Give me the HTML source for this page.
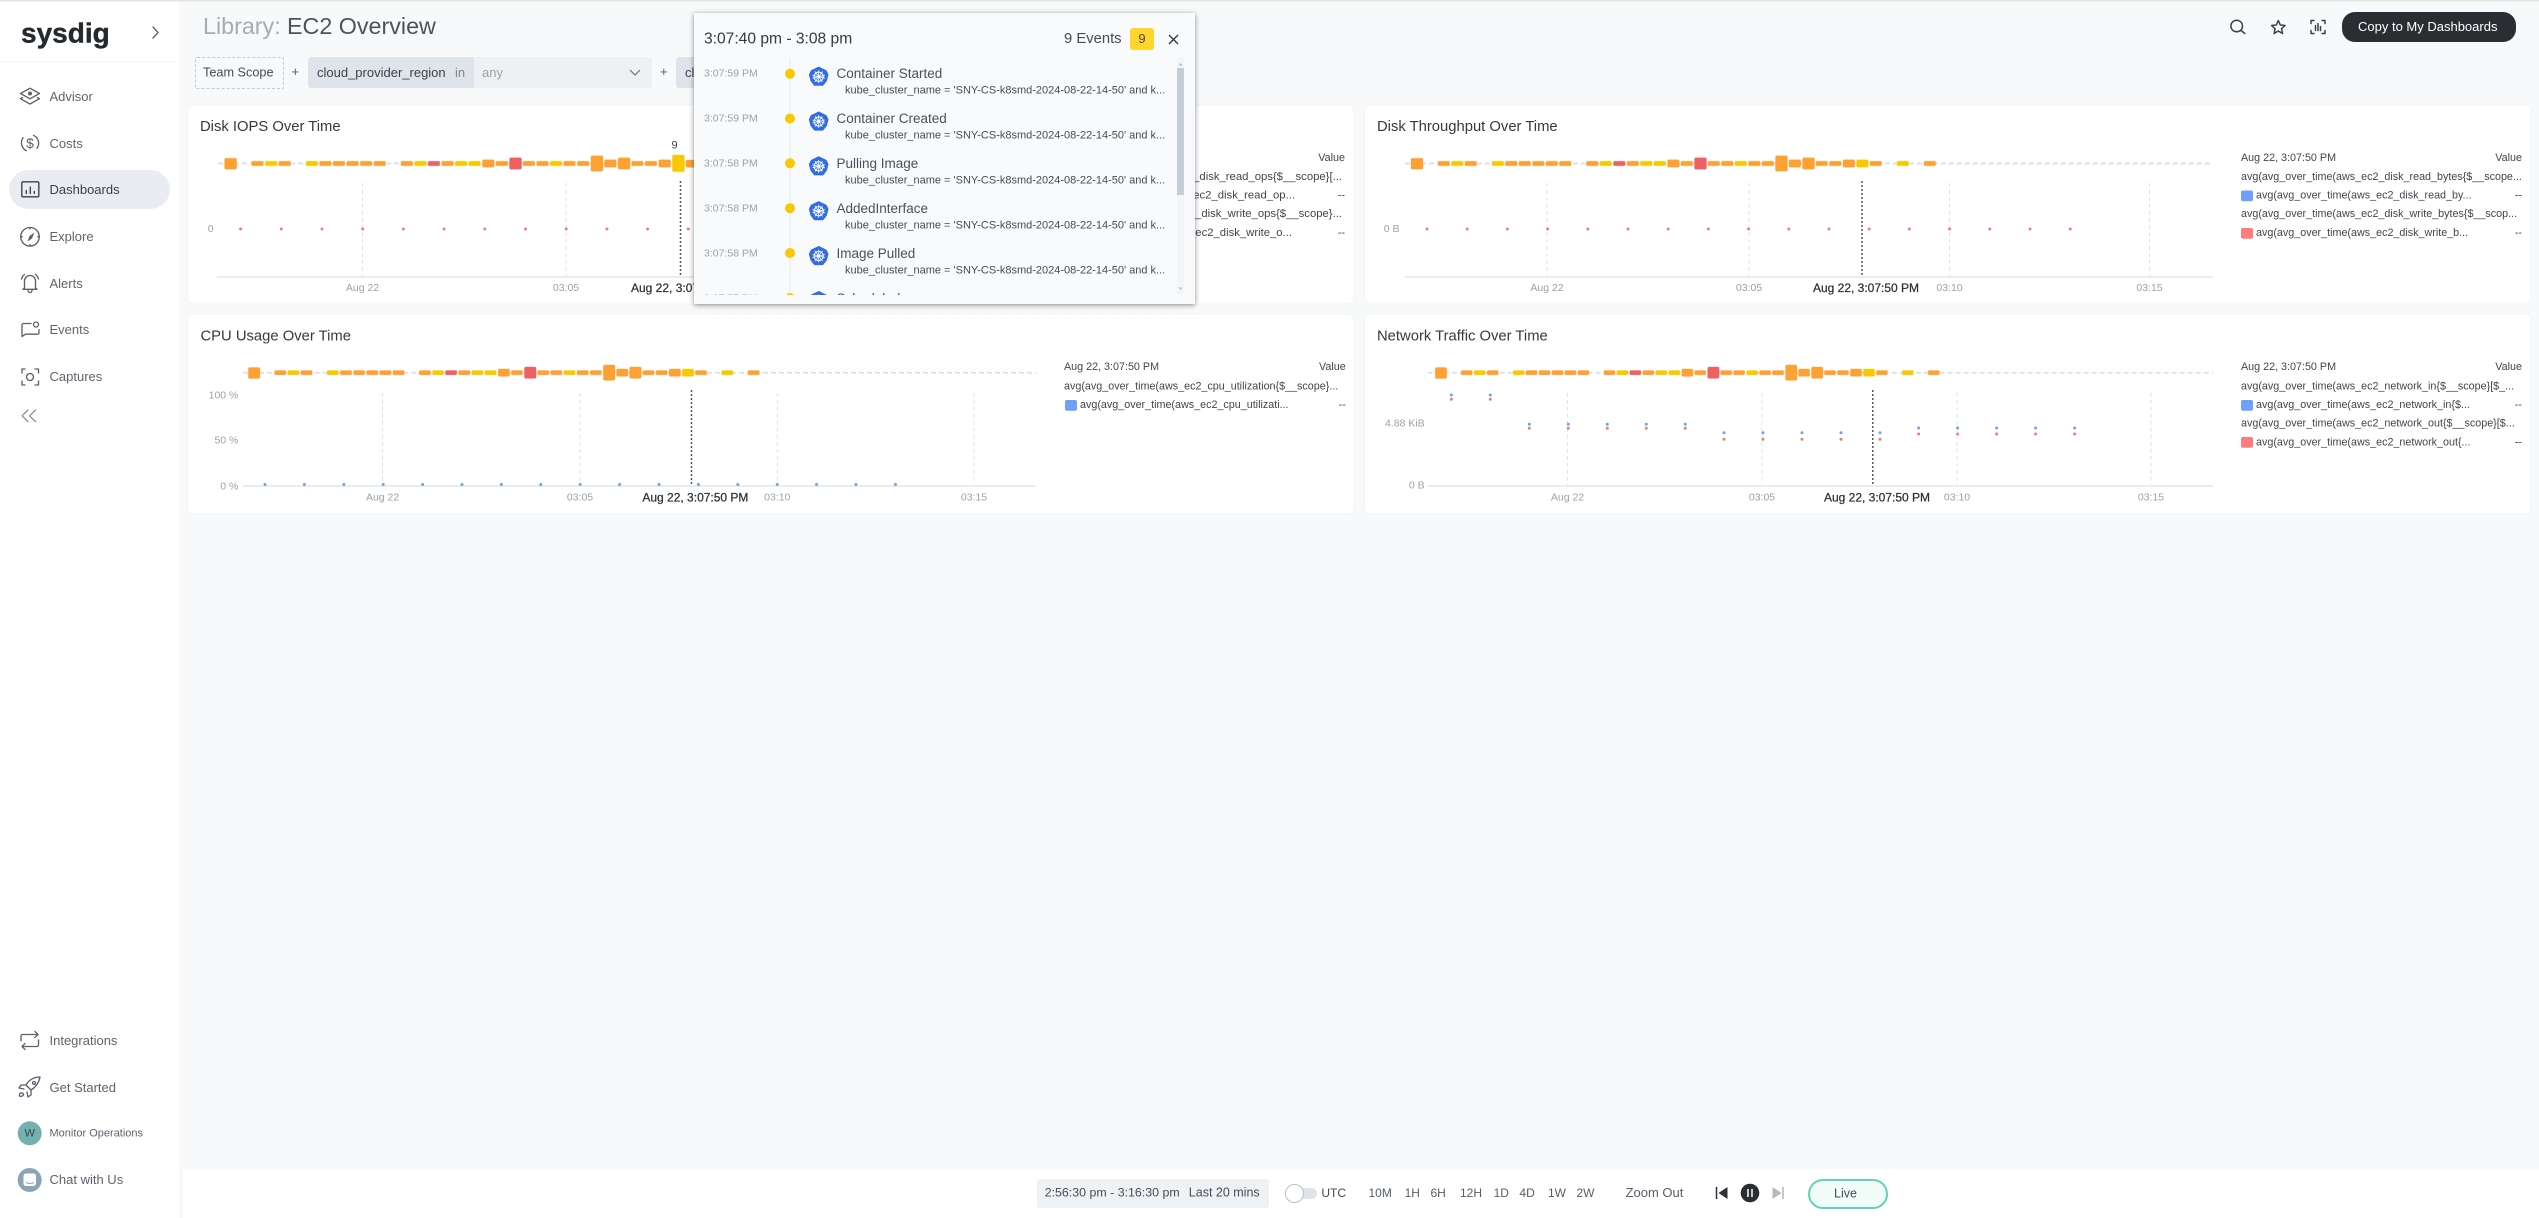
<!DOCTYPE html>
<html lang="en"><head><meta charset="utf-8"><title>Library: EC2 Overview</title>
<style>
html,body{margin:0;padding:0;width:2539px;height:1218px;overflow:hidden;background:#f8f9fb;font-family:"Liberation Sans",sans-serif;color:#3a4149}
#wrap{position:absolute;left:0;top:0;width:2539px;height:1218px;filter:blur(.35px)}
.t{position:absolute;white-space:nowrap;transform:translateY(-50%);line-height:1.2}
.b{position:absolute}
.nav{font-size:13px;color:#5c656e;left:49.5px}
#art{position:absolute;left:0;top:0;z-index:1}
#art text{font-family:"Liberation Sans",sans-serif;dominant-baseline:central}
.lg{font-size:10.75px;fill:#3f464e}
.lg1{font-size:11.3px;fill:#3f464e}
.ax{font-size:10.5px;fill:#9aa2aa}
.tip{font-size:12px;fill:#2c3238;stroke:#2c3238;stroke-width:.25px}
.ttl{font-size:14.8px;fill:#333a42}
.grid{stroke:#dfe2e6;stroke-width:1;stroke-dasharray:4 3}
.cur{stroke:#555;stroke-width:1.5;stroke-dasharray:2 2}
.laneline{stroke:#dde2e8;stroke-width:2;stroke-dasharray:5 3}
.axis{stroke:#e9ecf0;stroke-width:2}
.o{fill:#ffa033;stroke:#ffa033;stroke-opacity:.3;stroke-width:1}
.y{fill:#f7ca00;stroke:#f7ca00;stroke-opacity:.3;stroke-width:1}
.r{fill:#f06060;stroke:#f06060;stroke-opacity:.3;stroke-width:1}
.ic{fill:none;stroke:#5a636c;stroke-width:1.35;stroke-linecap:round;stroke-linejoin:round}
.dotp{stroke:#f5788c;stroke-width:3;stroke-linecap:round}
.dotb{stroke:#6f9ff7;stroke-width:3;stroke-linecap:round}
.dotr{stroke:#f7787c;stroke-width:3;stroke-linecap:round}
#pop{position:absolute;z-index:3;left:694px;top:13px;width:501px;height:291px;background:#f8fafc;box-shadow:0 1px 5px rgba(0,0,0,.45)}
#list{position:absolute;left:0;top:45px;width:501px;height:237px;overflow:hidden}
#pop .tm{font-size:10.5px;color:#9aa2aa;left:10px}
#pop .h{font-size:13.5px;color:#4a5159;left:142.5px}
#pop .s{font-size:11px;color:#454c54;left:151px}
#ui{position:absolute;left:0;top:0;z-index:2}
.rng{font-size:12px;color:#555e67;top:1193px}
</style></head><body>
<div id="wrap">
<svg id="art" width="2539" height="1218" viewBox="0 0 2539 1218" xmlns="http://www.w3.org/2000/svg">
<rect x="0" y="0" width="179" height="1218" fill="#fff"/>
<rect x="183" y="1169" width="2356" height="49" fill="#fff"/>
<rect x="0" y="61" width="179" height="1.5" fill="#f7f8fa"/>
<rect x="9" y="170" width="161" height="39" rx="19.5" fill="#e9edf2"/>
<rect x="0" y="0" width="2539" height="1.5" fill="#e3e5e3"/>

<g fill="#fff" stroke="#f2f4f6">
<rect x="187.5" y="105" width="1166.5" height="199" rx="6"/>
<rect x="1364.5" y="105" width="1166.5" height="199" rx="6"/>
<rect x="187.5" y="314" width="1166.5" height="200" rx="6"/>
<rect x="1364.5" y="314" width="1166.5" height="200" rx="6"/>
</g>

<defs>
<g id="lane">
<rect class="o" x="0" y="-5.2" width="12" height="11" rx="1.5"/>
<rect class="o" x="27" y="-2.2" width="11.6" height="4.4" rx="1"/>
<rect class="y" x="40.5" y="-2.2" width="11.6" height="4.4" rx="1"/>
<rect class="o" x="54" y="-2.2" width="11.6" height="4.4" rx="1"/>
<rect class="y" x="81" y="-2.2" width="11.6" height="4.4" rx="1"/>
<rect class="o" x="94.5" y="-2.2" width="11.6" height="4.4" rx="1"/>
<rect class="o" x="108" y="-2.2" width="11.6" height="4.4" rx="1"/>
<rect class="o" x="121.5" y="-2.2" width="11.6" height="4.4" rx="1"/>
<rect class="o" x="135" y="-2.2" width="11.6" height="4.4" rx="1"/>
<rect class="o" x="148.5" y="-2.2" width="11.6" height="4.4" rx="1"/>
<rect class="o" x="175.5" y="-2.2" width="11.6" height="4.4" rx="1"/>
<rect class="y" x="189" y="-2.2" width="11.6" height="4.4" rx="1"/>
<rect class="r" x="202.5" y="-2.2" width="11.6" height="4.4" rx="1"/>
<rect class="o" x="216" y="-2.2" width="11.6" height="4.4" rx="1"/>
<rect class="y" x="229.5" y="-2.2" width="11.6" height="4.4" rx="1"/>
<rect class="y" x="243" y="-2.2" width="11.6" height="4.4" rx="1"/>
<rect class="o" x="256.5" y="-3.7" width="11.8" height="7.4" rx="1.5"/>
<rect class="o" x="270" y="-2.2" width="11.6" height="4.4" rx="1"/>
<rect class="r" x="283.5" y="-5.7" width="12" height="11.4" rx="1.5"/>
<rect class="o" x="297" y="-2.2" width="11.6" height="4.4" rx="1"/>
<rect class="o" x="310.5" y="-2.2" width="11.6" height="4.4" rx="1"/>
<rect class="y" x="324" y="-2.2" width="11.6" height="4.4" rx="1"/>
<rect class="o" x="337.5" y="-2.2" width="11.6" height="4.4" rx="1"/>
<rect class="o" x="351" y="-2.2" width="11.6" height="4.4" rx="1"/>
<rect class="o" x="364.5" y="-7.7" width="12" height="15.4" rx="1.5"/>
<rect class="o" x="378" y="-3.7" width="11.8" height="7.4" rx="1.5"/>
<rect class="o" x="391.5" y="-5.7" width="12" height="11.4" rx="1.5"/>
<rect class="o" x="405" y="-2.2" width="11.6" height="4.4" rx="1"/>
<rect class="o" x="418.5" y="-2.2" width="11.6" height="4.4" rx="1"/>
<rect class="o" x="432" y="-3.7" width="11.8" height="7.4" rx="1.5"/>
<rect class="y" x="445.5" y="-3.7" width="11.8" height="7.4" rx="1.5"/>
<rect class="o" x="459" y="-2.2" width="11.6" height="4.4" rx="1"/>
<rect class="y" x="486" y="-2.2" width="11.6" height="4.4" rx="1"/>
<rect class="o" x="513" y="-2.2" width="11.6" height="4.4" rx="1"/>
</g>
<g id="k8s">
<path d="M0-9.2 7.2-5.7 9-2 7.4 4 4 8.3-4 8.3-7.4 4-9-2-7.2-5.7Z" fill="#326ce5" stroke="#326ce5" stroke-width="1.6" stroke-linejoin="round"/>
<circle r="4.6" fill="none" stroke="#fff" stroke-width="1.1"/>
<path d="M0-6.4V6.4M-6.2-1.5 6.2 1.5M-6.2 1.5 6.2-1.5M-3.8-5.2 3.8 5.2M3.8-5.2-3.8 5.2" stroke="#fff" stroke-width=".8"/>
<circle r="1.3" fill="#fff"/>
</g>
</defs>

<!-- Card 1 -->
<text class="ttl" x="200" y="127">Disk IOPS Over Time</text>
<line class="laneline" x1="218" y1="163.5" x2="1036" y2="163.5"/>
<use href="#lane" transform="translate(224.6 163.5) scale(1.005 1)"/>
<rect class="y" x="672.4" y="155" width="12" height="16.7" rx="1.5"/>
<rect class="o" x="686" y="160" width="12" height="7.4" rx="1.5"/>
<text x="674.5" y="145.7" font-size="11" fill="#3a4149" text-anchor="middle">9</text>
<line class="grid" x1="362.5" y1="183" x2="362.5" y2="277"/>
<line class="grid" x1="566" y1="183" x2="566" y2="277"/>
<line class="cur" x1="680.5" y1="181" x2="680.5" y2="277"/>
<line class="axis" x1="217" y1="277" x2="1036" y2="277"/>
<text class="ax" x="210.7" y="229" text-anchor="middle">0</text>
<line class="dotp" x1="240.6" y1="229" x2="694" y2="229" stroke-dasharray="0 40.7"/>
<text class="ax" x="362.5" y="288" text-anchor="middle">Aug 22</text>
<text class="ax" x="566" y="288" text-anchor="middle">03:05</text>
<text class="tip" x="631" y="288">Aug 22, 3:07:50 PM</text>
<text class="lg" x="1063" y="158">Aug 22, 3:07:50 PM</text>
<text class="lg" x="1345" y="158" text-anchor="end">Value</text>
<text class="lg1" x="1342" y="177" text-anchor="end">avg(avg_over_time(aws_ec2_disk_read_ops{$__scope}[...</text>
<text class="lg1" x="1295" y="195.6" text-anchor="end">avg(avg_over_time(aws_ec2_disk_read_op...</text>
<text class="lg" x="1345" y="195.6" text-anchor="end">--</text>
<text class="lg1" x="1342" y="214" text-anchor="end">avg(avg_over_time(aws_ec2_disk_write_ops{$__scope}...</text>
<text class="lg1" x="1292" y="233" text-anchor="end">avg(avg_over_time(aws_ec2_disk_write_o...</text>
<text class="lg" x="1345" y="233" text-anchor="end">--</text>

<!-- Card 2 -->
<text class="ttl" x="1377" y="127">Disk Throughput Over Time</text>
<line class="laneline" x1="1405" y1="163.5" x2="2213" y2="163.5"/>
<use href="#lane" transform="translate(1411 163.5)"/>
<line class="grid" x1="1547" y1="183" x2="1547" y2="277"/>
<line class="grid" x1="1749" y1="183" x2="1749" y2="277"/>
<line class="grid" x1="1949.5" y1="183" x2="1949.5" y2="277"/>
<line class="grid" x1="2149.5" y1="183" x2="2149.5" y2="277"/>
<line class="cur" x1="1862" y1="181" x2="1862" y2="277"/>
<line class="axis" x1="1405" y1="277" x2="2213" y2="277"/>
<text class="ax" x="1391.6" y="229" text-anchor="middle">0 B</text>
<line class="dotp" x1="1427" y1="229" x2="2072" y2="229" stroke-dasharray="0 40.2"/>
<text class="ax" x="1547" y="288" text-anchor="middle">Aug 22</text>
<text class="ax" x="1749" y="288" text-anchor="middle">03:05</text>
<text class="ax" x="1949.5" y="288" text-anchor="middle">03:10</text>
<text class="ax" x="2149.5" y="288" text-anchor="middle">03:15</text>
<text class="tip" x="1866" y="288" text-anchor="middle">Aug 22, 3:07:50 PM</text>
<text class="lg" x="2241" y="158">Aug 22, 3:07:50 PM</text>
<text class="lg" x="2522" y="158" text-anchor="end">Value</text>
<text class="lg" x="2241" y="177">avg(avg_over_time(aws_ec2_disk_read_bytes{$__scope...</text>
<rect x="2241" y="190.5" width="12" height="10.8" rx="2" fill="#6f9ff7"/>
<text class="lg" x="2256" y="195.6">avg(avg_over_time(aws_ec2_disk_read_by...</text>
<text class="lg" x="2522" y="195.6" text-anchor="end">--</text>
<text class="lg" x="2241" y="214">avg(avg_over_time(aws_ec2_disk_write_bytes{$__scop...</text>
<rect x="2241" y="228" width="12" height="10.8" rx="2" fill="#ff7b7b"/>
<text class="lg" x="2256" y="233">avg(avg_over_time(aws_ec2_disk_write_b...</text>
<text class="lg" x="2522" y="233" text-anchor="end">--</text>

<!-- Card 3 -->
<text class="ttl" x="200.5" y="336.7">CPU Usage Over Time</text>
<line class="laneline" x1="243" y1="372.7" x2="1036" y2="372.7"/>
<use href="#lane" transform="translate(248.3 372.7) scale(.974 1)"/>
<line class="grid" x1="382.6" y1="392.7" x2="382.6" y2="486"/>
<line class="grid" x1="580" y1="392.7" x2="580" y2="486"/>
<line class="grid" x1="777.3" y1="392.7" x2="777.3" y2="486"/>
<line class="grid" x1="974" y1="392.7" x2="974" y2="486"/>
<line class="cur" x1="691.5" y1="390" x2="691.5" y2="486"/>
<line class="axis" x1="243" y1="486" x2="1036" y2="486"/>
<line class="dotb" x1="265" y1="484.5" x2="898" y2="484.5" stroke-dasharray="0 39.4"/>
<text class="ax" x="238.4" y="395.7" text-anchor="end">100 %</text>
<text class="ax" x="238.4" y="440.7" text-anchor="end">50 %</text>
<text class="ax" x="238.4" y="486.3" text-anchor="end">0 %</text>
<text class="ax" x="382.6" y="497.7" text-anchor="middle">Aug 22</text>
<text class="ax" x="580" y="497.7" text-anchor="middle">03:05</text>
<text class="ax" x="777.3" y="497.7" text-anchor="middle">03:10</text>
<text class="ax" x="974" y="497.7" text-anchor="middle">03:15</text>
<text class="tip" x="695.4" y="497.7" text-anchor="middle">Aug 22, 3:07:50 PM</text>
<text class="lg" x="1064" y="367">Aug 22, 3:07:50 PM</text>
<text class="lg" x="1345.7" y="367" text-anchor="end">Value</text>
<text class="lg" x="1064" y="386.7">avg(avg_over_time(aws_ec2_cpu_utilization{$__scope}...</text>
<rect x="1065" y="400" width="12" height="10.8" rx="2" fill="#6f9ff7"/>
<text class="lg" x="1080" y="405">avg(avg_over_time(aws_ec2_cpu_utilizati...</text>
<text class="lg" x="1345.7" y="405" text-anchor="end">--</text>

<!-- Card 4 -->
<text class="ttl" x="1377" y="336.7">Network Traffic Over Time</text>
<line class="laneline" x1="1427.7" y1="372.7" x2="2213" y2="372.7"/>
<use href="#lane" transform="translate(1435.2 372.7) scale(.961 1)"/>
<line class="grid" x1="1567.5" y1="392.7" x2="1567.5" y2="486"/>
<line class="grid" x1="1762" y1="392.7" x2="1762" y2="486"/>
<line class="grid" x1="1957" y1="392.7" x2="1957" y2="486"/>
<line class="grid" x1="2151" y1="392.7" x2="2151" y2="486"/>
<line class="cur" x1="1872.8" y1="390" x2="1872.8" y2="486"/>
<line class="axis" x1="1427.7" y1="486" x2="2213" y2="486"/>
<line class="dotb" x1="1451.3" y1="395" x2="1492" y2="395" stroke-dasharray="0 39"/>
<line class="dotr" x1="1451.3" y1="399.3" x2="1492" y2="399.3" stroke-dasharray="0 39"/>
<line class="dotb" x1="1529.3" y1="424.3" x2="1686" y2="424.3" stroke-dasharray="0 39"/>
<line class="dotr" x1="1529.3" y1="428.3" x2="1686" y2="428.3" stroke-dasharray="0 39"/>
<line class="dotb" x1="1724" y1="432.7" x2="1881" y2="432.7" stroke-dasharray="0 39"/>
<line class="dotr" x1="1724" y1="439.3" x2="1881" y2="439.3" stroke-dasharray="0 39"/>
<line class="dotb" x1="1918.6" y1="428" x2="2075" y2="428" stroke-dasharray="0 39"/>
<line class="dotr" x1="1918.6" y1="434" x2="2075" y2="434" stroke-dasharray="0 39"/>
<text class="ax" x="1424.7" y="423.3" text-anchor="end">4.88 KiB</text>
<text class="ax" x="1424.7" y="485.7" text-anchor="end">0 B</text>
<text class="ax" x="1567.5" y="497.7" text-anchor="middle">Aug 22</text>
<text class="ax" x="1762" y="497.7" text-anchor="middle">03:05</text>
<text class="ax" x="1957" y="497.7" text-anchor="middle">03:10</text>
<text class="ax" x="2151" y="497.7" text-anchor="middle">03:15</text>
<text class="tip" x="1877" y="497.7" text-anchor="middle">Aug 22, 3:07:50 PM</text>
<text class="lg" x="2241" y="367">Aug 22, 3:07:50 PM</text>
<text class="lg" x="2522" y="367" text-anchor="end">Value</text>
<text class="lg" x="2241" y="386.7">avg(avg_over_time(aws_ec2_network_in{$__scope}[$_...</text>
<rect x="2241" y="400" width="12" height="10.8" rx="2" fill="#6f9ff7"/>
<text class="lg" x="2256" y="405">avg(avg_over_time(aws_ec2_network_in{$...</text>
<text class="lg" x="2522" y="405" text-anchor="end">--</text>
<text class="lg" x="2241" y="423.3">avg(avg_over_time(aws_ec2_network_out{$__scope}[$...</text>
<rect x="2241" y="437" width="12" height="10.8" rx="2" fill="#ff7b7b"/>
<text class="lg" x="2256" y="442.3">avg(avg_over_time(aws_ec2_network_out{...</text>
<text class="lg" x="2522" y="442.3" text-anchor="end">--</text>

<!-- Sidebar icons -->
<text x="21" y="33" font-size="28" font-weight="700" fill="#24292e" stroke="#24292e" stroke-width=".4">sysdig</text>
<path class="ic" d="M153 27l5 5.5-5 5.5" stroke-width="1.2"/>
<g class="ic">
<path d="M30 88.2l9.5 5.300-9.500 5.300-9.500-5.300z"/><path d="M22.500 97.500l-2 1.200 9.500 5.300 9.500-5.300-2-1.200"/>
<path d="M33.500 135.300a8.800 8.800 0 0 1 3.500 13M26.500 150.700a8.800 8.800 0 0 1-3.500-13"/>
<rect x="21.800" y="181.800" width="17" height="15" rx="1.200" stroke="#3a4149"/>
<path d="M26.300 193.500v-3M30.300 193.500v-6.500M34.300 193.500v-2" stroke="#3a4149"/>
<circle cx="30" cy="236.800" r="9.300"/>
<path d="M30 227.500v1.500M30 244.600v1.500M20.700 236.800h1.500M37.800 236.800h1.500"/>
<path d="M24.500 288v-7a5.500 5.500 0 0 1 11 0v7l1.500 1.300H23zM28 290.500a2 2 0 0 0 4 0M21.500 279a8 8 0 0 1 3-4.500M38.500 279a8 8 0 0 0-3-4.500"/>
<path d="M31 323.500h-7.500a1.500 1.500 0 0 0-1.500 1.500v11.500l3.500-2.300h12a1.500 1.500 0 0 0 1.500-1.500v-3"/>
<circle cx="36" cy="324.500" r="2.500"/>
<path d="M25 369h-3v4M22 381v4h3M35 369h3.500v4M38.500 381v4H35"/><circle cx="30" cy="377" r="3.500"/>
<path d="M28 410l-6 5.800 6 5.800M35.500 410l-6 5.800 6 5.800" stroke="#8a929a"/>
<path d="M21 1041v-5a1.500 1.500 0 0 1 1.500-1.500H38M35 1031.500l3 3-3 3"/>
<path d="M38.500 1040v5a1.500 1.500 0 0 1-1.500 1.500H22M25 1043.500l-3 3 3 3"/>
<path d="M40 1077c-6 0-11 3-14 8l5 5c5-3 8-8 9-13z"/><path d="M26 1085h-5l-2 3 5 1M31 1090v5l-3 2-1-5"/>
<circle cx="34" cy="1083" r="1.500"/><path d="M20 1096.500c-1.500-2 0-4 2-3.500 2 .5 2 2 .5 3z"/>
</g>
<circle cx="30" cy="93.500" r="2" fill="#5a636c"/>
<text x="30" y="143.200" font-size="14" fill="#5a636c" text-anchor="middle">$</text>
<path d="M34.500 232.500l-2.500 6-4.500 3 2-5.500z" fill="#5a636c"/>
<circle cx="29.700" cy="1133.300" r="12" fill="#74b0b0"/>
<text x="29.700" y="1133.300" font-size="11" fill="#2f4a4a" text-anchor="middle">W</text>
<circle cx="29.700" cy="1180" r="12" fill="#8ba5b8"/>
<rect x="23.500" y="1173.500" width="12.500" height="12.500" rx="2.500" fill="#fff"/>
<path d="M26 1182.500q4 2 8 0" fill="none" stroke="#8ba5b8" stroke-width="1"/>

<!-- top right icons -->
<g class="ic" style="stroke:#3a4149;stroke-width:1.5">
<circle cx="2236.700" cy="26" r="5.800"/><path d="M2241 30.500l3.800 3"/>
<path d="M2278.300 20.500l2 4.500 4.800.5-3.600 3.200 1 4.800-4.200-2.500-4.200 2.500 1-4.800-3.600-3.200 4.800-.5z"/>
<path d="M2314 20.500h-3v3M2322 20.500h3v3M2314 33.500h-3v-3M2322 33.500h3v-3M2315.500 25.500v5M2318 23.500v7M2320.500 26.500v4"/>
</g>

<!-- player -->
<path d="M1716.500 1187v12" stroke="#2c3238" stroke-width="1.500"/><path d="M1727.500 1187v12l-9-6z" fill="#2c3238"/>
<circle cx="1750" cy="1193" r="9.300" fill="#2a2e33"/><path d="M1748 1189v8M1752 1189v8" stroke="#fff" stroke-width="1.500"/>
<path d="M1772.500 1187v12l9-6z" fill="#b3b9c0"/><path d="M1783 1187v12" stroke="#b3b9c0" stroke-width="1.500"/>
<rect x="1298" y="1188" width="19" height="11" rx="5.500" fill="#dfe4ea"/>
<circle cx="1294.500" cy="1193.500" r="9" fill="#fff" stroke="#b9bfc6" stroke-width="1"/>
</svg>

<div id="ui">
<div class="t nav" style="top:97px">Advisor</div>
<div class="t nav" style="top:143.500px">Costs</div>
<div class="t nav" style="top:190px;color:#3a4149">Dashboards</div>
<div class="t nav" style="top:237px">Explore</div>
<div class="t nav" style="top:283.500px">Alerts</div>
<div class="t nav" style="top:330px">Events</div>
<div class="t nav" style="top:377px">Captures</div>
<div class="t nav" style="top:1041px">Integrations</div>
<div class="t nav" style="top:1087.500px">Get Started</div>
<div class="t nav" style="top:1133.500px;font-size:11px">Monitor Operations</div>
<div class="t nav" style="top:1180px">Chat with Us</div>

<div class="t" style="left:203px;top:27px;font-size:23.300px;color:#a4acb4">Library:</div>
<div class="t" style="left:287px;top:27px;font-size:23.300px;color:#4c535b">EC2 Overview</div>

<div class="b" style="left:195px;top:57px;width:87px;height:30px;border:1px dashed #c4cad1;border-radius:2px"></div>
<div class="t" style="left:203px;top:72.500px;font-size:12.700px;color:#454c54">Team Scope</div>
<div class="t" style="left:291.500px;top:72px;font-size:13px;color:#555e67">+</div>
<div class="b" style="left:308px;top:57px;width:166px;height:31px;background:#dfe4eb;border-radius:3px 0 0 3px"></div>
<div class="b" style="left:474px;top:57px;width:178px;height:31px;background:#eef0f3;border-radius:0 3px 3px 0"></div>
<div class="t" style="left:317px;top:73px;font-size:13px;color:#3a4149">cloud_provider_region</div>
<div class="t" style="left:455px;top:73px;font-size:13px;color:#7d858e">in</div>
<div class="t" style="left:482px;top:73px;font-size:13px;color:#9aa2aa">any</div>
<svg class="b" style="left:629px;top:69px" width="12" height="8"><path d="M1 1l5 5 5-5" fill="none" stroke="#6a737c" stroke-width="1.200"/></svg>
<div class="t" style="left:660px;top:72px;font-size:13px;color:#555e67">+</div>
<div class="b" style="left:676px;top:57px;width:40px;height:31px;background:#dfe4eb;border-radius:3px 0 0 3px"></div>
<div class="t" style="left:685px;top:73px;font-size:13px;color:#3a4149">cloud</div>

<div class="b" style="left:2342px;top:12px;width:174px;height:30px;background:#2a2e33;border-radius:13px"></div>
<div class="t" style="left:2358px;top:27px;font-size:13px;color:#fff">Copy to My Dashboards</div>

<div class="b" style="left:1037px;top:1179px;width:232px;height:29px;background:#eff2f5;border-radius:3px"></div>
<div class="t" style="left:1044.700px;top:1193.300px;font-size:12.400px;color:#454c54">2:56:30 pm - 3:16:30 pm</div>
<div class="t" style="left:1188.800px;top:1193.300px;font-size:12.500px;color:#454c54">Last 20 mins</div>
<div class="t rng" style="left:1321.400px;color:#454c54">UTC</div>
<div class="t rng" style="left:1368.500px">10M</div>
<div class="t rng" style="left:1404.600px">1H</div>
<div class="t rng" style="left:1430.500px">6H</div>
<div class="t rng" style="left:1460px">12H</div>
<div class="t rng" style="left:1493.600px">1D</div>
<div class="t rng" style="left:1519.400px">4D</div>
<div class="t rng" style="left:1548px">1W</div>
<div class="t rng" style="left:1576.500px">2W</div>
<div class="t rng" style="left:1625.600px;font-size:13px">Zoom Out</div>
<div class="b" style="left:1808px;top:1179px;width:76px;height:26px;border:2px solid #5fd4b5;border-radius:15px;background:#f2fdf9"></div>
<div class="t" style="left:1834px;top:1194px;font-size:12.500px;color:#454c54">Live</div>
</div>

<div id="pop">
<div class="t" style="left:10px;top:26.500px;font-size:15.600px;color:#333a42">3:07:40 pm - 3:08 pm</div>
<div class="t" style="left:370px;top:26.500px;font-size:14.800px;color:#454c54">9 Events</div>
<div class="b" style="left:436px;top:15px;width:24px;height:22px;background:#ffd52e;border-radius:3px;text-align:center;font-size:13px;line-height:22px;color:#454c54">9</div>
<svg class="b" style="left:473px;top:20px" width="13" height="13"><path d="M2 2l9 9M11 2l-9 9" stroke="#333a42" stroke-width="1.400" fill="none"/></svg>
<div id="list">
<svg class="b" style="left:0;top:0" width="501" height="237" viewBox="694 58 501 237">
<line x1="790" y1="58" x2="790" y2="295" stroke="#eceff2" stroke-width="1.500"/>
<g fill="#f7ca00"><circle cx="790" cy="73.700" r="5"/><circle cx="790" cy="118.500" r="5"/><circle cx="790" cy="163.300" r="5"/><circle cx="790" cy="208.200" r="5"/><circle cx="790" cy="253" r="5"/><circle cx="790" cy="298" r="5"/></g>
<use href="#k8s" transform="translate(818.700 76.700)"/>
<use href="#k8s" transform="translate(818.700 121.500)"/>
<use href="#k8s" transform="translate(818.700 166.300)"/>
<use href="#k8s" transform="translate(818.700 211.200)"/>
<use href="#k8s" transform="translate(818.700 256)"/>
<use href="#k8s" transform="translate(818.700 301)"/>
<rect x="1177" y="58" width="7" height="236" fill="#f2f4f6"/>
<rect x="1177" y="68" width="7" height="127" fill="#c5cdd6"/>
<path d="M1178.500 65.500l2-2.500 2 2.500zM1178.500 287.500l2 2.500 2-2.500z" fill="#b5bcc4"/>
</svg>
<div class="t tm" style="top:16px">3:07:59 PM</div><div class="t h" style="top:16px">Container Started</div><div class="t s" style="top:33px">kube_cluster_name = 'SNY-CS-k8smd-2024-08-22-14-50' and k...</div>
<div class="t tm" style="top:61px">3:07:59 PM</div><div class="t h" style="top:61px">Container Created</div><div class="t s" style="top:78px">kube_cluster_name = 'SNY-CS-k8smd-2024-08-22-14-50' and k...</div>
<div class="t tm" style="top:106px">3:07:58 PM</div><div class="t h" style="top:106px">Pulling Image</div><div class="t s" style="top:123px">kube_cluster_name = 'SNY-CS-k8smd-2024-08-22-14-50' and k...</div>
<div class="t tm" style="top:151px">3:07:58 PM</div><div class="t h" style="top:151px">AddedInterface</div><div class="t s" style="top:168px">kube_cluster_name = 'SNY-CS-k8smd-2024-08-22-14-50' and k...</div>
<div class="t tm" style="top:195.700px">3:07:58 PM</div><div class="t h" style="top:195.700px">Image Pulled</div><div class="t s" style="top:212.700px">kube_cluster_name = 'SNY-CS-k8smd-2024-08-22-14-50' and k...</div>
<div class="t tm" style="top:240.500px">3:07:57 PM</div><div class="t h" style="top:240.500px">Scheduled</div>
</div>
</div>
</div>
</body></html>
